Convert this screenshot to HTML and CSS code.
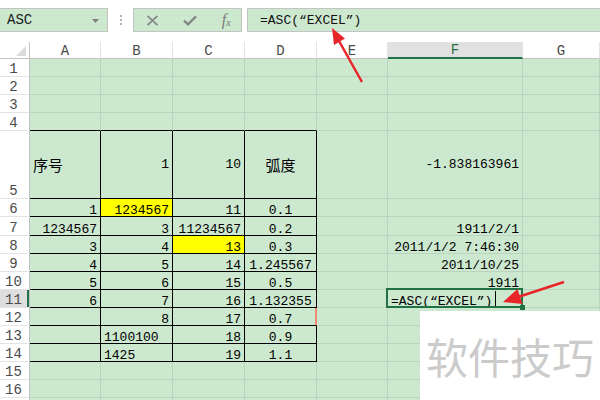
FILE: index.html
```html
<!DOCTYPE html>
<html lang="zh">
<head>
<meta charset="utf-8">
<title>ASC</title>
<link rel="stylesheet" href="styles.css">
</head>
<body>
<div class="toolbar">
  <div class="namebox"><span>ASC</span><svg class="dd" width="7" height="4" viewBox="0 0 7 4"><polygon points="0,0 7,0 3.5,4" fill="#808080"/></svg></div>
  <div class="sep"><i></i><i></i><i></i></div>
  <div class="btns">
    <svg width="13" height="11" viewBox="0 0 13 11"><path d="M1.5 0.8 L11.5 10.2 M11.5 0.8 L1.5 10.2" stroke="#858585" stroke-width="1.6" fill="none"/></svg>
    <svg width="14" height="11" viewBox="0 0 14 11"><path d="M1 5.6 L5 9.4 L13 1.4" stroke="#858585" stroke-width="2.2" fill="none" stroke-linejoin="miter"/></svg>
    <span class="fx">f<sub>x</sub></span>
  </div>
  <div class="fbox">=ASC(“EXCEL”)</div>
</div>

<div class="sheet">
  <div class="h corner"><svg width="10" height="10" viewBox="0 0 10 10"><polygon points="10,0 10,10 0,10" fill="#dcdcdc"/></svg></div>
  <div class="h">A</div><div class="h">B</div><div class="h">C</div><div class="h">D</div><div class="h">E</div><div class="h sel">F</div><div class="h">G</div>

  <div class="rh">1</div><div class="c"></div><div class="c"></div><div class="c"></div><div class="c"></div><div class="c"></div><div class="c"></div><div class="c"></div>
  <div class="rh">2</div><div class="c"></div><div class="c"></div><div class="c"></div><div class="c"></div><div class="c"></div><div class="c"></div><div class="c"></div>
  <div class="rh">3</div><div class="c"></div><div class="c"></div><div class="c"></div><div class="c"></div><div class="c"></div><div class="c"></div><div class="c"></div>
  <div class="rh">4</div><div class="c bb"></div><div class="c bb"></div><div class="c bb"></div><div class="c bb"></div><div class="c"></div><div class="c"></div><div class="c"></div>

  <div class="rh">5</div><div class="c bx mid zh">序号</div><div class="c bx mid r">1</div><div class="c bx mid r">10</div><div class="c bx mid m zh">弧度</div><div class="c"></div><div class="c mid r">-1.838163961</div><div class="c"></div>
  <div class="rh">6</div><div class="c bx r">1</div><div class="c bx r y">1234567</div><div class="c bx r">11</div><div class="c bx m">0.1</div><div class="c"></div><div class="c"></div><div class="c"></div>
  <div class="rh">7</div><div class="c bx r">1234567</div><div class="c bx r">3</div><div class="c bx r">11234567</div><div class="c bx m">0.2</div><div class="c"></div><div class="c r">1911/2/1</div><div class="c"></div>
  <div class="rh">8</div><div class="c bx r">3</div><div class="c bx r">4</div><div class="c bx r y">13</div><div class="c bx m">0.3</div><div class="c"></div><div class="c r">2011/1/2 7:46:30</div><div class="c"></div>
  <div class="rh">9</div><div class="c bx r">4</div><div class="c bx r">5</div><div class="c bx r">14</div><div class="c bx m">1.245567</div><div class="c"></div><div class="c r">2011/10/25</div><div class="c"></div>
  <div class="rh">10</div><div class="c bx r">5</div><div class="c bx r">6</div><div class="c bx r">15</div><div class="c bx m">0.5</div><div class="c"></div><div class="c r">1911</div><div class="c"></div>
  <div class="rh rsel">11</div><div class="c bx r">6</div><div class="c bx r">7</div><div class="c bx r">16</div><div class="c bx m">1.132355</div><div class="c"></div><div class="c act">=ASC(“EXCEL”)<span class="caret"></span></div><div class="c"></div>
  <div class="rh">12</div><div class="c bx"></div><div class="c bx r">8</div><div class="c bx r">17</div><div class="c bx m mark">0.7</div><div class="c"></div><div class="c"></div><div class="c"></div>
  <div class="rh">13</div><div class="c bx"></div><div class="c bx">1100100</div><div class="c bx r">18</div><div class="c bx m">0.9</div><div class="c"></div><div class="c"></div><div class="c"></div>
  <div class="rh">14</div><div class="c bx"></div><div class="c bx">1425</div><div class="c bx r">19</div><div class="c bx m">1.1</div><div class="c"></div><div class="c"></div><div class="c"></div>
  <div class="rh">15</div><div class="c"></div><div class="c"></div><div class="c"></div><div class="c"></div><div class="c"></div><div class="c"></div><div class="c"></div>
  <div class="rh">16</div><div class="c"></div><div class="c"></div><div class="c"></div><div class="c"></div><div class="c"></div><div class="c"></div><div class="c"></div>
  <div class="rh"></div><div class="c"></div><div class="c"></div><div class="c"></div><div class="c"></div><div class="c"></div><div class="c"></div><div class="c"></div>
</div>

<div class="wm">软件技巧</div>

<svg class="arrows" width="600" height="400" viewBox="0 0 600 400">
  <line x1="362" y1="82" x2="339" y2="41" stroke="#e8262a" stroke-width="2.5"/>
  <polygon points="332,28 345,38.5 334,45" fill="#e8262a"/>
  <line x1="564" y1="282" x2="518" y2="297" stroke="#e8262a" stroke-width="2.5"/>
  <polygon points="503,302 517.5,289 522.5,304" fill="#e8262a"/>
</svg>
</body>
</html>
```

FILE: styles.css
```css
* {
  box-sizing: border-box;
  margin: 0;
  padding: 0;
}

body {
  width: 600px;
  height: 400px;
  overflow: hidden;
  background: #ffffff;
  font-family: "Liberation Mono", "Noto Sans CJK SC", monospace;
  position: relative;
}

/* ---------- toolbar ---------- */
.toolbar {
  height: 42px;
  display: flex;
  align-items: flex-start;
  padding-top: 8px;
}

.namebox,
.btns,
.fbox {
  height: 24px;
  background: #cce8cf;
  border: 1px solid #c4c4c4;
  display: flex;
  align-items: center;
}

.namebox {
  width: 109px;
  margin-left: -1px;
  padding: 0 8px 0 7px;
  justify-content: space-between;
  font-size: 14px;
  color: #1a1a1a;
}

.namebox .dd {
  margin-top: 1px;
}

.sep {
  width: 25px;
  height: 24px;
  display: flex;
  flex-direction: column;
  align-items: center;
  justify-content: center;
  gap: 2px;
}

.sep i {
  width: 2px;
  height: 2px;
  background: #b4b4b4;
}

.btns {
  width: 109px;
  padding: 0 10px 0 12px;
  justify-content: space-between;
}

.fx {
  font-family: "Liberation Serif", serif;
  font-style: italic;
  font-size: 16px;
  color: #7c7c7c;
  line-height: 1;
}

.fx sub {
  font-size: 11px;
  vertical-align: -1px;
}

.fbox {
  flex: 1;
  margin-left: 5px;
  margin-right: -1px;
  padding-left: 12px;
  font-size: 13px;
  color: #111;
}

/* ---------- sheet ---------- */
.sheet {
  display: grid;
  grid-template-columns: 30px 71px 72px 72px 72px 71px 135px 77px;
  grid-template-rows: 17px repeat(4, 18px) 68px 18px 19px repeat(9, 18px) 18px;
}

.h {
  background: #ffffff;
  border-right: 1px solid #e3e3e3;
  border-bottom: 1px solid #c3c3c3;
  display: flex;
  align-items: flex-end;
  justify-content: center;
  font-size: 14px;
  line-height: 11px;
  color: #4a4a4a;
  padding-bottom: 1px;
}

.h.corner {
  justify-content: flex-end;
  padding: 0 3px 2px 0;
  border-right-color: #c3c3c3;
}

.h.sel {
  background: #e1e1e1;
  border-bottom: 2px solid #217346;
  color: #217346;
}

.rh {
  background: #ffffff;
  border-right: 1px solid #c3c3c3;
  border-bottom: 1px solid #e3e3e3;
  display: flex;
  align-items: flex-end;
  justify-content: center;
  font-size: 14px;
  line-height: 11px;
  color: #4a4a4a;
  padding: 0 2px 1px 0;
}

.rh.rsel {
  background: #dedede;
  box-shadow: inset -2px 0 #217346;
}

.c {
  background: #cce8cf;
  border-right: 1px solid #bcd3be;
  border-bottom: 1px solid #bcd3be;
  display: flex;
  align-items: flex-end;
  padding: 0 3px;
  font-size: 13px;
  line-height: 11px;
  color: #000;
  white-space: nowrap;
}

.c.r { justify-content: flex-end; }
.c.m { justify-content: center; }
.c.mid { align-items: center; }
.c.y { background: #ffff00; }

.c.zh {
  font-family: "Noto Sans CJK SC", sans-serif;
  font-size: 15px;
}

.c.bx {
  border-right-color: #000;
  border-bottom-color: #000;
}

.c.bb {
  border-bottom-color: #000;
}

.c.mark {
  box-shadow: inset -1px 0 #ef8a74;
  border-right-color: #ef8a74;
}

.c.act {
  position: relative;
}

.c.act::after {
  content: "";
  position: absolute;
  left: -2px;
  top: -2px;
  right: -1px;
  bottom: -1px;
  border: 2px solid #217346;
  z-index: 2;
}

.c.act::before {
  content: "";
  position: absolute;
  right: -3px;
  bottom: -3px;
  width: 5px;
  height: 5px;
  background: #217346;
  z-index: 3;
}

.caret {
  display: inline-block;
  width: 1px;
  height: 15px;
  background: #000;
  margin: 0 0 1px 3px;
}

/* ---------- overlays ---------- */
.wm {
  position: absolute;
  left: 420px;
  top: 311px;
  width: 180px;
  height: 89px;
  background: #ffffff;
  display: flex;
  align-items: center;
  justify-content: center;
  font-family: "Noto Sans CJK SC", sans-serif;
  font-size: 42px;
  color: #cbcbcb;
  z-index: 4;
}

.arrows {
  position: absolute;
  left: 0;
  top: 0;
  z-index: 5;
  pointer-events: none;
}
```
